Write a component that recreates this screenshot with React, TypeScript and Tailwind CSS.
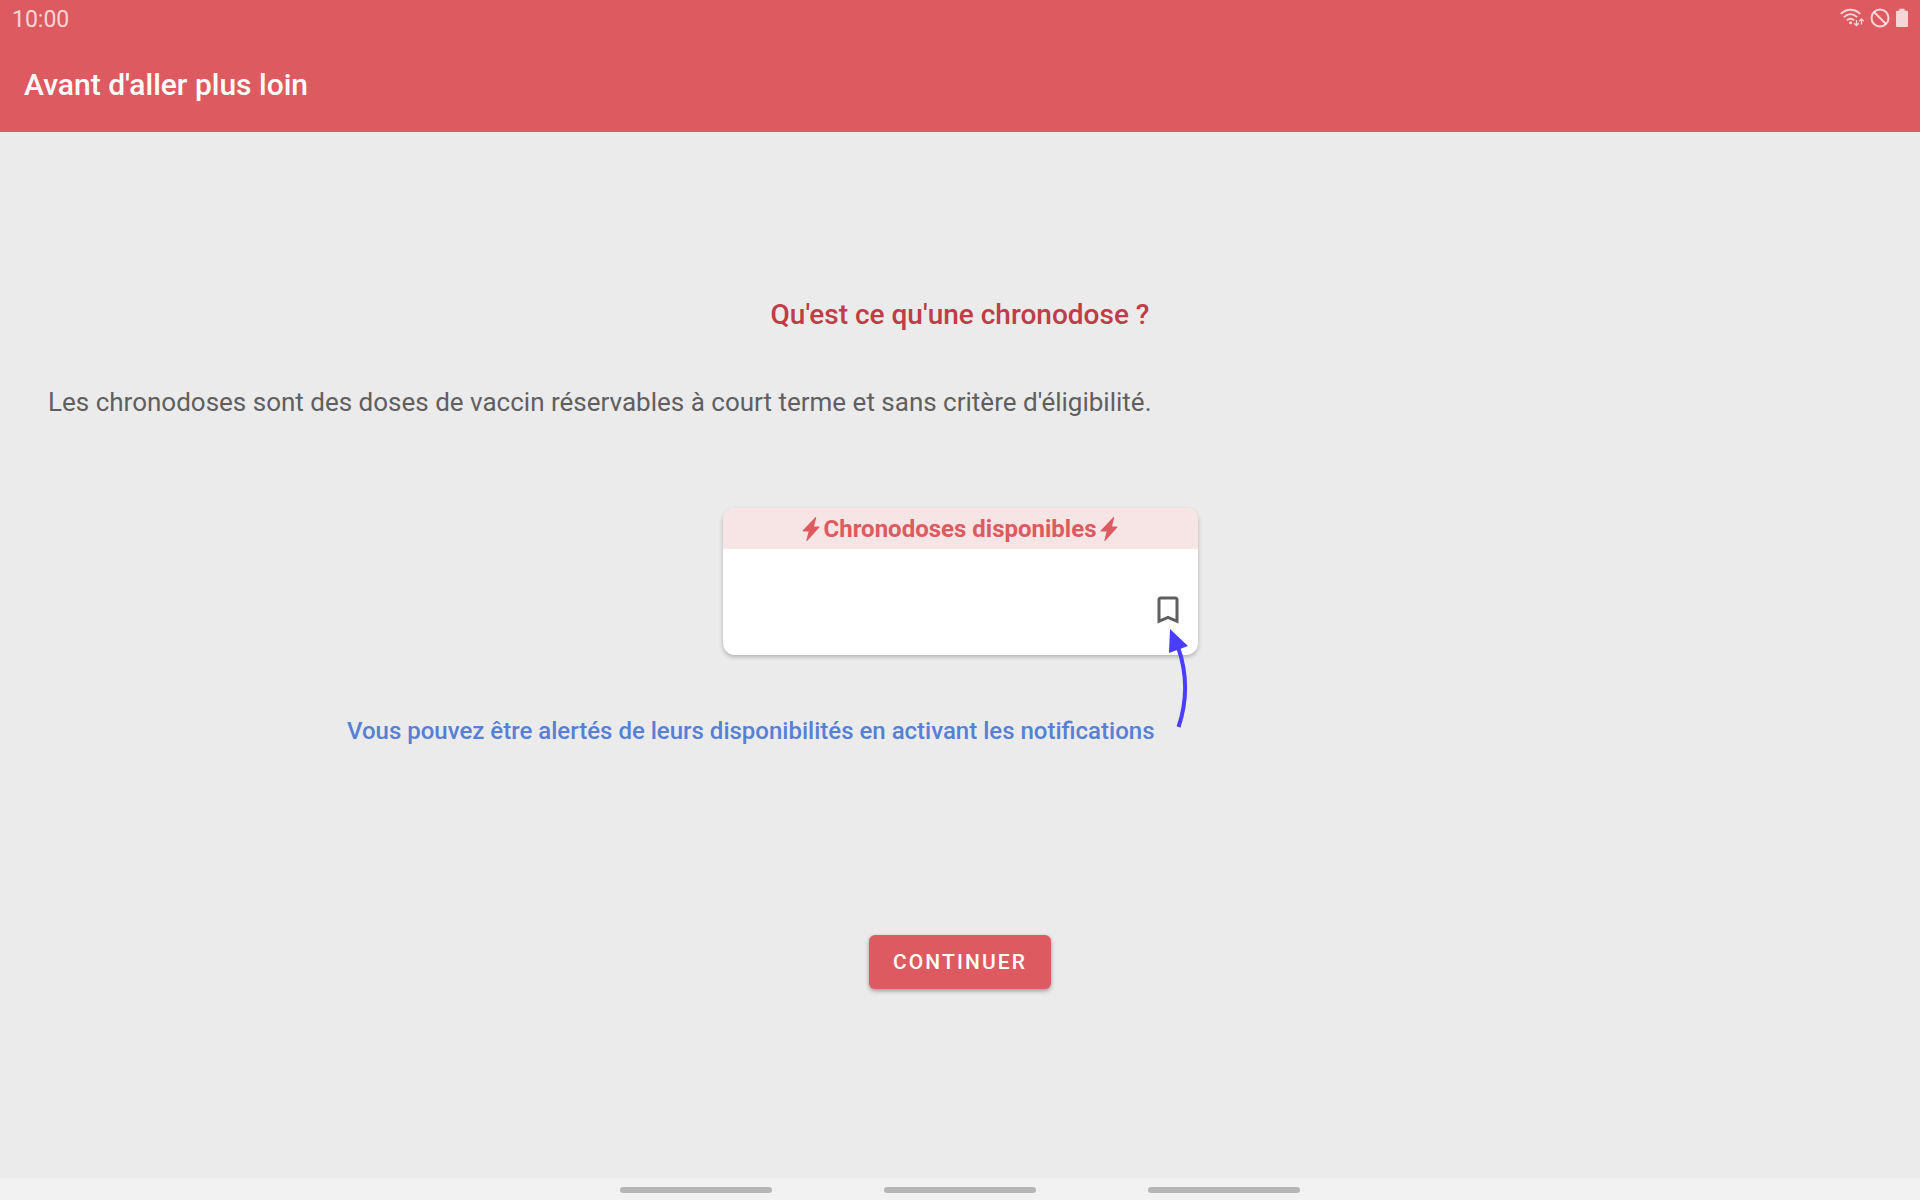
function WifiIcon() {
  return (
    <svg viewBox="0 0 24 20" className="h-5 w-6" fill="none" stroke="currentColor" strokeWidth="1.8" aria-hidden="true">
      <path d="M.7 5.8C6.6.4 14.4.4 20.300 5.800" />
      <path d="M3.800 9.100c4.200-3.700 9.200-3.700 13.400 0" />
      <path d="M6.900 12.300c2.400-2 4.800-2 7.200 0" />
      <circle cx="10.500" cy="14.800" r="1.500" fill="currentColor" stroke="none" />
      <path d="M16.500 12v5M14.200 15.200l2.300 2.300 2.300-2.300M21.500 16.500v-5M19.200 13.300l2.300-2.300 2.300 2.300" strokeWidth="1.300" />
    </svg>
  );
}

function BlockedIcon() {
  return (
    <svg viewBox="0 0 20 20" className="size-5" fill="none" stroke="currentColor" strokeWidth="2" aria-hidden="true">
      <circle cx="10" cy="10" r="8.500" />
      <path d="M4 4l12 12" />
    </svg>
  );
}

function BatteryIcon() {
  return (
    <svg viewBox="0 0 12 20" className="h-5 w-3" fill="currentColor" aria-hidden="true">
      <path d="M4 .8h4a.7.7 0 0 1 .7.7v1.200h2.300a1 1 0 0 1 1 1V18a1 1 0 0 1-1 1H1a1 1 0 0 1-1-1V3.700a1 1 0 0 1 1-1h2.300V1.500A.7.7 0 0 1 4 .8z" />
    </svg>
  );
}

function BoltIcon() {
  return (
    <svg viewBox="0 0 18 24" className="h-6 w-[18px]" fill="currentColor" aria-hidden="true">
      <path d="M13.300.2c.6-.4 1 0 .9.600L12 9.400h4.800c.7 0 .9.500.5 1L5.300 23.800c-.5.500-1.100.2-.9-.500l2.200-8.800H1.200c-.7 0-.9-.5-.5-1z" />
    </svg>
  );
}

function BookmarkIcon() {
  return (
    <svg viewBox="0 0 24 24" className="size-9" fill="currentColor" aria-hidden="true">
      <path d="M17 3H7c-1.100 0-2 .9-2 2v16l7-3 7 3V5c0-1.100-.9-2-2-2zm0 15-5-2.180L7 18V5h10v13z" />
    </svg>
  );
}

function ArrowDrawing() {
  return (
    <svg viewBox="0 0 26 104" className="h-[104px] w-[26px] text-[#493dff]" aria-hidden="true">
      <path d="M13.500 100Q27 60 13 20" fill="none" stroke="currentColor" strokeWidth="4" />
      <path d="M5 2l18 17L4 26z" fill="currentColor" />
    </svg>
  );
}

export default function App() {
  return (
    <div className="flex min-h-screen flex-col bg-[#ebebeb] font-['Roboto',sans-serif]">
      <header className="bg-[#dd5a60] text-white">
        <div className="flex h-9 items-center justify-between px-3 text-white/75">
          <time className="pt-1 text-[23px]">10:00</time>
          <div className="flex items-center gap-1.5">
            <WifiIcon />
            <BlockedIcon />
            <BatteryIcon />
          </div>
        </div>
        <div className="flex h-24 items-center px-6">
          <h1 className="text-[30px] font-medium">Avant d'aller plus loin</h1>
        </div>
      </header>

      <main className="flex flex-1 flex-col pt-40">
        <h2 className="text-center text-[28px] leading-[46px] font-medium text-[#c03c46]">Qu'est ce qu'une chronodose ?</h2>
        <p className="mt-[42px] px-12 text-[26px] leading-[44px] text-[#5f5f5f]">
          Les chronodoses sont des doses de vaccin réservables à court terme et sans critère d'éligibilité.
        </p>

        <section className="mt-[84px] grid grid-cols-[1fr_475px_1fr]">
          <div className="relative col-start-2">
            <div className="overflow-hidden rounded-xl bg-white shadow-[0_2px_4px_rgba(0,0,0,0.25)]">
              <div className="flex h-[41px] items-center justify-center gap-1 bg-[#f7e4e4] text-2xl font-bold text-[#dd5a60]">
                <BoltIcon />
                <h3>Chronodoses disponibles</h3>
                <BoltIcon />
              </div>
              <div className="flex h-[106px] items-end justify-end pr-3 pb-[27px] text-[#5f5f5f]">
                <button type="button" aria-label="Activer les notifications">
                  <BookmarkIcon />
                </button>
              </div>
            </div>
            <div className="absolute top-[119px] right-[7px]">
              <ArrowDrawing />
            </div>
          </div>
          <p className="col-span-2 mt-[54px] pr-[43px] text-right text-2xl leading-[44px] font-medium text-[#5680d6]">
            Vous pouvez être alertés de leurs disponibilités en activant les notifications
          </p>
        </section>

        <button
          type="button"
          className="mt-[182px] h-[54px] self-center rounded-md bg-[#dd5a60] px-6 pt-0.5 text-[21px] font-medium tracking-widest text-white shadow-[0_2px_4px_rgba(0,0,0,0.35)]"
        >
          CONTINUER
        </button>
      </main>

      <footer className="flex h-[22px] items-center justify-center gap-28 bg-[#f2f2f2] pt-0.5">
        <span className="h-1.5 w-[152px] rounded-full bg-[#b6b6b6]" />
        <span className="h-1.5 w-[152px] rounded-full bg-[#b6b6b6]" />
        <span className="h-1.5 w-[152px] rounded-full bg-[#b6b6b6]" />
      </footer>
    </div>
  );
}
